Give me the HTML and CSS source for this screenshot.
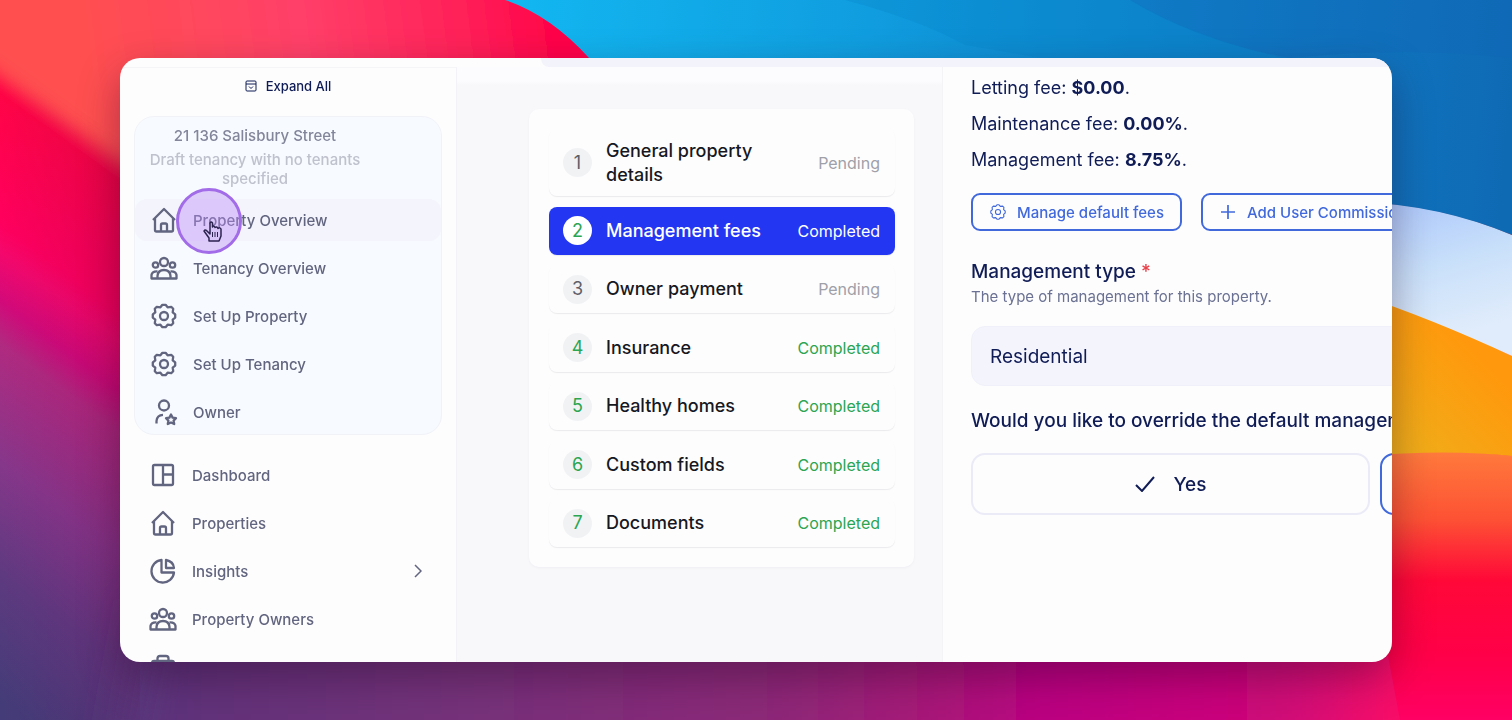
FILE: index.html
```html
<!DOCTYPE html>
<html lang="en">
<head>
<meta charset="utf-8">
<title>Property Overview</title>
<link rel="stylesheet" href="styles.css">
</head>
<body>
<svg class="wallpaper" viewBox="0 0 1512 720" preserveAspectRatio="none" aria-hidden="true">
  <defs>
    <linearGradient id="warm" gradientUnits="userSpaceOnUse" x1="0" y1="0" x2="-336" y2="448">
      <stop offset="0" stop-color="#ff4f4c"/><stop offset=".07" stop-color="#ff474b"/><stop offset=".13" stop-color="#ff0446"/>
      <stop offset=".32" stop-color="#ff005e"/><stop offset=".36" stop-color="#f4086c"/><stop offset=".43" stop-color="#d20a7a"/>
      <stop offset=".49" stop-color="#b02a80"/><stop offset=".66" stop-color="#86378a"/><stop offset=".82" stop-color="#5e3a80"/><stop offset="1" stop-color="#443c78"/>
    </linearGradient>
    <linearGradient id="shade"><stop offset="0" stop-color="#60006a" stop-opacity="0"/><stop offset="1" stop-color="#60003a" stop-opacity=".18"/></linearGradient>
    <linearGradient id="coral" gradientUnits="userSpaceOnUse" x1="90" y1="60" x2="560" y2="0">
      <stop offset="0" stop-color="#ff4f50"/><stop offset=".45" stop-color="#ff4068"/><stop offset=".8" stop-color="#ff2058"/><stop offset="1" stop-color="#ff0048"/>
    </linearGradient>
    <linearGradient id="floor" gradientUnits="userSpaceOnUse" x1="60" y1="0" x2="1512" y2="0">
      <stop offset="0" stop-color="#503a80"/><stop offset=".1" stop-color="#62327a"/><stop offset=".3" stop-color="#78307a"/><stop offset=".5" stop-color="#8e2878"/>
      <stop offset=".6" stop-color="#a81878"/><stop offset=".68" stop-color="#bc0082"/><stop offset=".85" stop-color="#d00878"/><stop offset=".92" stop-color="#fa0868"/><stop offset="1" stop-color="#ff004c"/>
    </linearGradient>
    <linearGradient id="sky" gradientUnits="userSpaceOnUse" x1="520" y1="0" x2="1512" y2="90">
      <stop offset="0" stop-color="#12b6f0"/><stop offset=".35" stop-color="#109ddf"/><stop offset=".6" stop-color="#0e86ce"/><stop offset=".85" stop-color="#1074bf"/><stop offset="1" stop-color="#0f6ab4"/>
    </linearGradient>
    <linearGradient id="ice" gradientUnits="userSpaceOnUse" x1="1400" y1="202" x2="1440" y2="340"><stop offset="0" stop-color="#adc8fb"/><stop offset=".5" stop-color="#c9e0fa"/><stop offset="1" stop-color="#e0ecfb"/></linearGradient>
    <linearGradient id="amber" x1="1" y1="0" x2="0" y2="1"><stop offset=".3" stop-color="#ff980c"/><stop offset="1" stop-color="#ecb41e"/></linearGradient>
    <linearGradient id="fire" x1="0" y1="0" x2="0" y2="1"><stop offset="0" stop-color="#ff7a3c"/><stop offset=".25" stop-color="#fd5234"/><stop offset=".48" stop-color="#ff0838"/><stop offset=".75" stop-color="#ff0048"/><stop offset="1" stop-color="#ff0064"/></linearGradient>
    <filter id="soft" x="-20%" y="-50%" width="140%" height="200%"><feGaussianBlur stdDeviation="9"/></filter>
    <filter id="wide" x="-20%" y="-80%" width="140%" height="260%"><feGaussianBlur stdDeviation="24"/></filter>
  </defs>
  <rect width="1512" height="720" fill="url(#warm)"/>
  <rect width="140" height="720" fill="url(#shade)"/>
  <path d="M-40 -40H620V100H250L130 166 -40 44Z" fill="url(#coral)" filter="url(#soft)"/>
  <path d="M150 600H1600V820H110Z" fill="url(#floor)" filter="url(#wide)"/>
  <path d="M1360 455Q1450 448 1512 456V720H1400L1385 640Z" fill="url(#fire)"/>
  <path d="M1360 295Q1430 315 1512 356V456Q1450 449 1360 456Z" fill="url(#amber)"/>
  <path d="M1360 202Q1440 204 1512 235V356Q1430 318 1360 295Z" fill="url(#ice)"/>
  <path d="M505 0H1512V235Q1440 205 1360 202V120H620L589 58Q550 15 505 0Z" fill="url(#sky)"/>
  <path d="M845 0Q920 20 965 45 1010 52 1060 62H1300Q1200 40 1130 0Z" fill="#0a86cc" opacity=".35"/>
  <path d="M1130 0Q1200 42 1290 58 1410 46 1512 58V0Z" fill="#1068b8" opacity=".35"/>
</svg>

<svg class="sprite" aria-hidden="true">
  <symbol id="i-home" viewBox="0 0 28 28"><path d="M3 14 14 3 25 14M5 12.500V24Q5 25.500 6.500 25.500H21.500Q23 25.500 23 24V12.500M11 25V19Q11 17.500 12.500 17.500H15.500Q17 17.500 17 19V25"/></symbol>
  <symbol id="i-people" viewBox="0 0 28 28"><circle cx="14" cy="8" r="4"/><circle cx="5.500" cy="11" r="2.700"/><circle cx="22.500" cy="11" r="2.700"/><path d="M7.500 24.500V22Q8 16 14 16T20.500 22V24.500ZM7.500 24.500H1.500V21Q2 17 7.500 17.300M20.500 24.500H26.500V21Q26 17 20.500 17.300"/></symbol>
  <symbol id="i-gear" viewBox="0 0 28 28"><circle cx="14" cy="14" r="4"/><path d="M12.400 2.800H15.600L17.600 5.300 21.200 4.800 23.200 6.800 22.700 10.400 25.200 12.400V15.600L22.700 17.600 23.200 21.200 21.200 23.200 17.600 22.700 15.600 25.200H12.400L10.400 22.700 6.800 23.200 4.800 21.200 5.300 17.600 2.800 15.600V12.400L5.300 10.400 4.800 6.800 6.800 4.800 10.400 5.300Z"/></symbol>
  <symbol id="i-owner" viewBox="0 0 28 28"><circle cx="14" cy="7.500" r="5"/><path d="M6.500 25.500V23Q7 17 13 16.800M21 16.500 22.600 19.600 26 20.200 23.600 22.600 24.200 26 21 24.500 17.800 26 18.400 22.600 16 20.200 19.400 19.600Z"/></symbol>
  <symbol id="i-board" viewBox="0 0 28 28"><rect x="4" y="4" width="20" height="20" rx="1.500"/><path d="M14 4V24M14 13.500H24"/></symbol>
  <symbol id="i-pie" viewBox="0 0 28 28"><path d="M12.500 3A11.300 11.300 0 1 0 25 15.500H12.500ZM17 3V11H25Q24.500 4.500 17 3Z"/></symbol>
  <symbol id="i-case" viewBox="0 0 28 28"><rect x="3" y="8" width="22" height="17" rx="2"/><path d="M8.500 8V5.500Q8.500 3 11 3H17Q19.500 3 19.500 5.500V8M3 14H25"/></symbol>
</svg>

<main class="window">
  <header class="topbar"><div class="topbar-fill"></div></header>
  <div class="panes">
    <aside class="sidebar">
      <button class="expand" type="button">
        <svg class="icon-xs" viewBox="0 0 12 12"><rect x="1" y="1" width="10" height="10" rx="1"/><path d="M1 4H11M4 6.500 6 8.500 8 6.500"/></svg>
        Expand All
      </button>
      <section class="group">
        <h2 class="group-title">21 136 Salisbury Street</h2>
        <p class="group-note">Draft tenancy with no tenants specified</p>
        <nav class="nav">
          <a class="nav-link active" href="#"><svg class="icon"><use href="#i-home"/></svg><span>Property Overview</span>
            <svg class="pointer" viewBox="0 0 66 66" aria-hidden="true">
              <circle cx="33" cy="33" r="31.500" fill="#b98af5" fill-opacity=".42" stroke="#a26be8" stroke-width="3"/>
              <path d="M34 35V46L31 43Q29 41 28 43L33 50V53H43L45 48V41Q44 39 42 40.500 41 38 39 39.500 38 37 36.500 39V35Q35 33 34 35Z" fill="#d9c4fa" stroke="#2c2350" stroke-width="1.500" stroke-linejoin="round"/>
              <path d="M36.500 44V49M39 44V49M41.500 44V49" fill="none" stroke="#2c2350"/>
            </svg></a>
          <a class="nav-link" href="#"><svg class="icon"><use href="#i-people"/></svg><span>Tenancy Overview</span></a>
          <a class="nav-link" href="#"><svg class="icon"><use href="#i-gear"/></svg><span>Set Up Property</span></a>
          <a class="nav-link" href="#"><svg class="icon"><use href="#i-gear"/></svg><span>Set Up Tenancy</span></a>
          <a class="nav-link" href="#"><svg class="icon"><use href="#i-owner"/></svg><span>Owner</span></a>
        </nav>
      </section>
      <nav class="nav">
        <a class="nav-link" href="#"><svg class="icon"><use href="#i-board"/></svg><span>Dashboard</span></a>
        <a class="nav-link" href="#"><svg class="icon"><use href="#i-home"/></svg><span>Properties</span></a>
        <a class="nav-link" href="#"><svg class="icon"><use href="#i-pie"/></svg><span>Insights</span><svg class="chevron" viewBox="0 0 8 14"><path d="M1 1 7 7 1 13"/></svg></a>
        <a class="nav-link" href="#"><svg class="icon"><use href="#i-people"/></svg><span>Property Owners</span></a>
        <a class="nav-link" href="#" aria-label="Portfolio"><svg class="icon"><use href="#i-case"/></svg></a>
      </nav>
    </aside>

    <section class="steps-pane">
      <ol class="steps">
        <li><a class="step tall" href="#"><span class="num">1</span><span class="label">General property details</span><span class="status">Pending</span></a></li>
        <li><a class="step done current" href="#"><span class="num">2</span><span class="label">Management fees</span><span class="status">Completed</span></a></li>
        <li><a class="step" href="#"><span class="num">3</span><span class="label">Owner payment</span><span class="status">Pending</span></a></li>
        <li><a class="step done" href="#"><span class="num">4</span><span class="label">Insurance</span><span class="status">Completed</span></a></li>
        <li><a class="step done" href="#"><span class="num">5</span><span class="label">Healthy homes</span><span class="status">Completed</span></a></li>
        <li><a class="step done" href="#"><span class="num">6</span><span class="label">Custom fields</span><span class="status">Completed</span></a></li>
        <li><a class="step done" href="#"><span class="num">7</span><span class="label">Documents</span><span class="status">Completed</span></a></li>
      </ol>
    </section>

    <section class="form-pane">
      <div class="form">
        <p class="fee">Letting fee: <strong>$0.00</strong>.</p>
        <p class="fee">Maintenance fee: <strong>0.00%</strong>.</p>
        <p class="fee">Management fee: <strong>8.75%</strong>.</p>
        <div class="actions">
          <button class="btn" type="button"><svg class="icon-sm"><use href="#i-gear"/></svg>Manage default fees</button>
          <button class="btn" type="button"><svg class="icon-sm" viewBox="0 0 18 18"><path d="M9 2V16M2 9H16"/></svg>Add User Commission</button>
        </div>
        <label class="field-label" for="type">Management type <span class="req">*</span></label>
        <p class="hint" id="type-hint">The type of management for this property.</p>
        <select class="select" id="type" aria-describedby="type-hint"><option>Residential</option></select>
        <p class="field-label question">Would you like to override the default management fee?</p>
        <div class="options">
          <button class="option" type="button"><svg class="check" viewBox="0 0 20 16"><path d="M1 9 7 15 19 1"/></svg>Yes</button>
          <button class="option chosen" type="button" aria-label="No"></button>
        </div>
      </div>
    </section>
  </div>
</main>
</body>
</html>
```
FILE: styles.css
```css
* { box-sizing: border-box; }
body {
  margin: 0;
  height: 100vh;
  padding: 58px 120px;
  overflow: hidden;
  font-family: Inter, "Noto Sans", sans-serif;
  font-weight: 500;
}
h2, p, ol { margin: 0; padding: 0; }
button, select { font: inherit; color: inherit; }
a { color: inherit; text-decoration: none; }
svg { fill: none; stroke: currentColor; flex: none; }
.wallpaper { position: fixed; inset: 0; width: 100%; height: 100%; z-index: -1; stroke: none; }
.sprite { position: absolute; width: 0; height: 0; }

.window {
  display: flex;
  flex-direction: column;
  height: 100%;
  border-radius: 20px;
  overflow: hidden;
  background: #fdfdfe;
  box-shadow: 0 16px 40px rgba(30, 0, 30, 0.36);
}
.topbar { flex: none; height: 9px; padding-left: 421px; }
.topbar-fill { height: 100%; background: #f3f3fc; border-radius: 0 0 0 8px; }
.panes { display: flex; flex: 1; min-height: 0; }

.sidebar {
  flex: none;
  width: 337px;
  padding: 7px 14px;
  overflow: hidden;
  border-top: 1px solid #f5f5f8;
  border-right: 1px solid #f3f3f7;
  color: #62657f;
}
.expand {
  display: flex;
  align-items: center;
  justify-content: center;
  gap: 9px;
  width: 100%;
  height: 22px;
  margin-bottom: 19px;
  padding: 0;
  border: 0;
  background: none;
  color: #0f1c55;
  font-size: 13px;
}
.icon-xs { width: 12px; height: 12px; }
.group {
  padding-top: 9px;
  margin-bottom: 16px;
  border: 1px solid #f0f2f8;
  border-radius: 20px;
  background: #f7fafe;
}
.group-title, .group-note { width: 240px; text-align: center; font-size: 15px; }
.group-title { line-height: 20px; margin-bottom: 4px; color: #83859b; font-weight: 500; }
.group-note { padding: 0 10px; line-height: 19px; margin-bottom: 8px; color: #bfc1cd; }
.nav-link {
  position: relative;
  display: flex;
  align-items: center;
  gap: 15px;
  height: 42px;
  margin-bottom: 6px;
  padding: 0 16px 0 15px;
  font-size: 15px;
}
.nav { padding-top: 3px; }
.group .nav-link:last-child { margin-bottom: 1px; }
.active { background: #f4f4fd; border-radius: 12px; }
.icon { width: 28px; height: 28px; stroke-width: 2.3; stroke-linejoin: round; }
.chevron { width: 8px; height: 14px; margin-left: auto; margin-right: 4px; stroke-width: 1.5; }
.pointer { position: absolute; left: 41px; top: -11px; width: 66px; height: 66px; }

.steps-pane {
  flex: none;
  width: 486px;
  padding: 42px 28px 0 72px;
  background: linear-gradient(#fcfcfe 14px, #f8f8fb 18px);
  border-right: 1px solid #f4f4f6;
}
.steps {
  display: grid;
  align-content: space-between;
  min-height: 458px;
  padding: 20px 19px 20px 20px;
  list-style: none;
  border-radius: 10px;
  background: #fdfdfe;
  box-shadow: 0 1px 3px rgba(20, 20, 60, 0.04);
}
.step {
  display: flex;
  align-items: center;
  gap: 14px;
  min-height: 48px;
  padding: 0 15px 0 14px;
  border-radius: 8px;
  box-shadow: 0 1px 1px rgba(20, 20, 40, 0.08);
  color: #17181f;
  font-size: 18px;
  line-height: 24px;
}
.tall { min-height: 67px; }
.num {
  display: grid;
  place-items: center;
  flex: none;
  width: 29px;
  height: 29px;
  border-radius: 50%;
  background: #f1f2f4;
  color: #5d6069;
  font-weight: 400;
}
.label { flex: 1; }
.status { color: #9fa0a8; font-size: 16px; font-weight: 400; }
.done .num, .done .status { color: #2aa552; }
.current { background: #2337f2; color: #fff; }
.current .num { background: #fff; }
.current .status { color: #fff; }

.form-pane { flex: 1; min-width: 0; overflow: hidden; padding: 3px 0 0 28px; }
.form { width: 808px; color: #101c55; font-size: 19px; }
.fee { line-height: 36px; font-size: 18px; font-weight: 400; }
.fee strong { font-weight: 700; }
.actions { display: flex; gap: 19px; margin: 15px 0 28px; }
.btn {
  display: flex;
  align-items: center;
  gap: 10px;
  height: 38px;
  padding: 0 16px;
  border: 2px solid #4169dc;
  border-radius: 9px;
  background: none;
  color: #4169dc;
  font-size: 15px;
}
.icon-sm { width: 18px; height: 18px; stroke-width: 1.7; stroke-linejoin: round; }
.field-label { display: block; line-height: 26px; }
.req { color: #e8414a; }
.hint { margin-bottom: 17px; line-height: 24px; color: #6b7192; font-size: 15px; font-weight: 400; }
.select {
  display: block;
  appearance: none;
  width: 100%;
  height: 60px;
  padding: 0 18px;
  border: 1px solid #f0f0fa;
  border-radius: 14px;
  background: #f4f4fd;
  font-weight: 400;
}
.question { margin: 22px 0 19px; }
.options { display: grid; grid-template-columns: 1fr 1fr; gap: 10px; }
.option {
  display: flex;
  align-items: center;
  justify-content: center;
  gap: 19px;
  height: 62px;
  border: 2px solid #ebebf7;
  border-radius: 14px;
  background: none;
}
.chosen { border-color: #4169dc; }
.check { width: 20px; height: 16px; stroke-width: 2; }
```
